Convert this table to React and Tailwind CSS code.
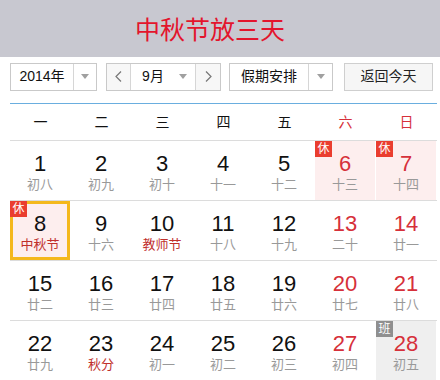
const FONT = { fontFamily: '"Liberation Sans", "Noto Sans CJK SC", sans-serif' };

const Caret = () => (
    <svg width="8" height="5" viewBox="0 0 8 5">
        <path d="M0 0 H8 L4 5 Z" fill="#a0a0a0" />
    </svg>
)

const Chevron = ({ dir }) => (
    <svg width="7" height="11" viewBox="0 0 7 11">
        <path d={dir === 'left' ? 'M6 0.5 L1 5.5 L6 10.5' : 'M1 0.5 L6 5.5 L1 10.5'} fill="none" stroke="#777" strokeWidth="1.2" />
    </svg>
)

const Select = ({ label, width, labelWidth }) => (
    <div className={`flex h-[28px] border border-[#c9c9c9] bg-white ${width}`}>
        <div className={`flex items-center justify-center text-[14px] text-[#111] ${labelWidth}`}>{label}</div>
        <div className="flex-1 flex items-center justify-center border-l border-[#d6d6d6]">
            <Caret />
        </div>
    </div>
)

const days = [
    [1, '初八'], [2, '初九'], [3, '初十'], [4, '十一'], [5, '十二'], [6, '十三'], [7, '十四'],
    [8, '中秋节'], [9, '十六'], [10, '教师节'], [11, '十八'], [12, '十九'], [13, '二十'], [14, '廿一'],
    [15, '廿二'], [16, '廿三'], [17, '廿四'], [18, '廿五'], [19, '廿六'], [20, '廿七'], [21, '廿八'],
    [22, '廿九'], [23, '秋分'], [24, '初一'], [25, '初二'], [26, '初三'], [27, '初四'], [28, '初五'],
];

const festivals = ['中秋节', '教师节', '秋分'];
const rest = [6, 7, 8];

const Badge = ({ text, gray, offset }) => (
    <div className={`absolute w-[17px] h-[16px] flex items-center justify-center text-[12px] leading-none text-white ${offset ? '-left-[3px] -top-[3px]' : 'left-0 top-0'} ${gray ? 'bg-[#8f8f8f]' : 'bg-[#ea3d2f]'}`}>
        {text}
    </div>
)

const DayCell = ({ day, lunar, col }) => {
    const weekend = col >= 5;
    const today = day === 8;
    const work = day === 28;
    let bg = '';
    if (today) bg = 'bg-[#fdeeee] border-[3px] border-[#f4b81c]';
    else if (rest.includes(day)) bg = 'bg-[#fdeeee]';
    else if (work) bg = 'bg-[#efefef]';
    return (
        <div className="h-[59px] pr-[1px]">
            <div className={`relative h-full flex flex-col items-center ${today ? 'pt-[7px]' : 'pt-[10px]'} ${rest.includes(day) && !today ? 'h-[58px]' : ''} ${bg}`}>
                {rest.includes(day) && <Badge text="休" offset={today} />}
                {work && <Badge text="班" gray />}
                <div className={`text-[22px] leading-[25px] ${weekend ? 'text-[#d6303a]' : 'text-[#111]'}`}>{day}</div>
                <div className={`text-[13px] leading-[17px] ${festivals.includes(lunar) ? 'text-[#c0302c]' : 'text-[#999]'}`}>{lunar}</div>
            </div>
        </div>
    )
}

export default function App() {
    const weeks = [0, 1, 2, 3].map((w) => days.slice(w * 7, w * 7 + 7));
    return (
        <div className="w-[440px] h-[380px] bg-white overflow-hidden" style={FONT}>
            <div className="h-[57px] bg-[#c8c8d0] flex items-center pl-[135px] pt-[4px]">
                <span className="text-[25px] leading-none text-[#e3152d]">中秋节放三天</span>
            </div>

            <div className="flex items-center h-[46px] pl-[10px] pt-[5px] pb-[12px]">
                <Select label="2014年" width="w-[87px]" labelWidth="w-[62px]" />
                <div className="flex h-[28px] w-[115px] ml-[9px] border border-[#c9c9c9] bg-white">
                    <div className="w-[23px] flex items-center justify-center bg-[#f7f7f7]"><Chevron dir="left" /></div>
                    <div className="w-[66px] flex border-l border-r border-[#d6d6d6]">
                        <div className="w-[44px] flex items-center justify-center text-[14px] text-[#111]">9月</div>
                        <div className="flex-1 flex items-center justify-start pl-[4px]"><Caret /></div>
                    </div>
                    <div className="flex-1 flex items-center justify-center bg-[#f7f7f7]"><Chevron dir="right" /></div>
                </div>
                <div className="ml-[8px]">
                    <Select label="假期安排" width="w-[104px]" labelWidth="w-[78px]" />
                </div>
                <div className="ml-[11px] h-[28px] w-[89px] border border-[#cfcfcf] bg-[#f6f6f6] flex items-center justify-center text-[14px] text-[#222]">
                    返回今天
                </div>
            </div>

            <div className="w-[427px] ml-[10px]">
                <div className="border-t border-[#6aaedf] grid grid-cols-7 h-[37px] items-center">
                    {['一', '二', '三', '四', '五', '六', '日'].map((d, i) => (
                        <div key={d} className={`text-center text-[14px] ${i >= 5 ? 'text-[#d6303a]' : 'text-[#111]'}`}>{d}</div>
                    ))}
                </div>
                {weeks.map((week, w) => (
                    <div key={w} className="grid grid-cols-7 border-t border-[#dcdcdc]">
                        {week.map(([day, lunar], i) => (
                            <DayCell key={day} day={day} lunar={lunar} col={i} />
                        ))}
                    </div>
                ))}
            </div>
        </div>
    )
}
